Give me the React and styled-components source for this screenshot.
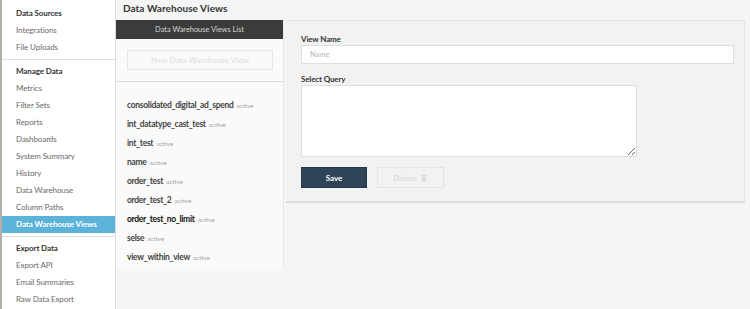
import React from "react";
import styled, { createGlobalStyle } from "styled-components";

const GlobalStyle = createGlobalStyle`
  html, body {
    margin: 0;
    padding: 0;
    background: #f5f5f5;
    font-family: Lato, "Open Sans", "Liberation Sans", sans-serif;
  }
  * { box-sizing: border-box; }
`;

const sideGroups = [
  { title: "Data Sources", items: ["Integrations", "File Uploads"] },
  {
    title: "Manage Data",
    items: [
      "Metrics",
      "Filter Sets",
      "Reports",
      "Dashboards",
      "System Summary",
      "History",
      "Data Warehouse",
      "Column Paths",
      "Data Warehouse Views",
    ],
  },
  { title: "Export Data", items: ["Export API", "Email Summaries", "Raw Data Export"] },
];

const views = [
  { name: "consolidated_digital_ad_spend" },
  { name: "int_datatype_cast_test" },
  { name: "int_test" },
  { name: "name" },
  { name: "order_test" },
  { name: "order_test_2" },
  { name: "order_test_no_limit", strong: true },
  { name: "selse" },
  { name: "view_within_view" },
];

function App() {
  return (
    <>
      <GlobalStyle />
      <Page>
        <Sidebar>
          {sideGroups.map((g, i) => (
            <Group key={g.title} last={i === sideGroups.length - 1}>
              <GroupTitle>{g.title}</GroupTitle>
              {g.items.map((item) => (
                <NavItem key={item} active={item === "Data Warehouse Views"}>
                  {item}
                </NavItem>
              ))}
            </Group>
          ))}
        </Sidebar>

        <Main>
          <PageTitle>Data Warehouse Views</PageTitle>
          <Content>
            <ListPanel>
              <ListHeader>Data Warehouse Views List</ListHeader>
              <ListTop>
                <GhostButton disabled>New Data Warehouse View</GhostButton>
              </ListTop>
              <ViewList>
                {views.map((v) => (
                  <ViewRow key={v.name}>
                    <ViewName strong={v.strong}>{v.name}</ViewName>
                    <Status>active</Status>
                  </ViewRow>
                ))}
              </ViewList>
            </ListPanel>

            <FormPanel>
              <Label>View Name</Label>
              <TextInput placeholder="Name" />
              <Label>Select Query</Label>
              <QueryArea />
              <Actions>
                <SaveButton>Save</SaveButton>
                <DeleteButton disabled>
                  Delete
                  <svg width="8" height="8" viewBox="0 0 10 10" fill="currentColor">
                    <rect x="1" y="1" width="8" height="1.4" />
                    <rect x="4" y="0" width="2" height="1.2" />
                    <path d="M2 3h6l-0.6 7H2.6z" />
                  </svg>
                </DeleteButton>
              </Actions>
            </FormPanel>
          </Content>
        </Main>
      </Page>
    </>
  );
}

const Page = styled.div`
  display: flex;
  width: 750px;
  height: 309px;
  overflow: hidden;
`;

const Sidebar = styled.nav`
  width: 116px;
  flex-shrink: 0;
  background: #fff;
  border-left: 2px solid #b3aea8;
  border-right: 1px solid #dcdcdc;
  padding-top: 5px;
`;

const Group = styled.div`
  padding-bottom: 3px;
  border-bottom: ${(p) => (p.last ? "none" : "1px solid #dedede")};
  margin-bottom: 3px;
`;

const GroupTitle = styled.div`
  height: 17px;
  line-height: 17px;
  padding-left: 14px;
  font-size: 8px;
  letter-spacing: -0.1px;
  font-weight: 700;
  color: #333;
`;

const NavItem = styled.div`
  height: 17px;
  line-height: 17px;
  padding-left: 14px;
  font-size: 8px;
  letter-spacing: -0.1px;
  font-weight: ${(p) => (p.active ? 700 : 400)};
  color: ${(p) => (p.active ? "#fff" : "#6a6a6a")};
  background: ${(p) => (p.active ? "#5cb3d9" : "transparent")};
`;

const Main = styled.div`
  flex: 1;
  display: flex;
  flex-direction: column;
`;

const PageTitle = styled.div`
  height: 20px;
  line-height: 16px;
  padding-left: 7px;
  font-size: 10px;
  letter-spacing: 0.05px;
  font-weight: 700;
  color: #333;
`;

const Content = styled.div`
  display: flex;
  align-items: flex-start;
  padding-right: 5px;
`;

const ListPanel = styled.div`
  width: 168px;
  flex-shrink: 0;
  background: #fafafa;
  border-right: 1px solid #e6e6e6;
  margin-right: 2px;
`;

const ListHeader = styled.div`
  height: 19px;
  line-height: 19px;
  background: #3b3b3b;
  color: #d6d6d6;
  text-align: center;
  font-size: 7.5px;
  letter-spacing: -0.05px;
`;

const ListTop = styled.div`
  padding: 11px 10px 11px 11px;
  border-bottom: 1px solid #dcdcdc;
`;

const GhostButton = styled.button`
  display: block;
  width: 146px;
  height: 20px;
  background: #fafafa;
  border: 1px solid #e6e6e6;
  color: #e4e4e4;
  font-family: inherit;
  font-size: 8px;
  font-weight: 700;
  padding: 0;
`;

const ViewList = styled.div`
  padding: 10px 0 6px 11px;
`;

const ViewRow = styled.div`
  height: 19px;
  line-height: 19px;
  white-space: nowrap;
`;

const ViewName = styled.span`
  font-size: 8.5px;
  letter-spacing: -0.3px;
  font-weight: 700;
  color: ${(p) => (p.strong ? "#111" : "#444")};
`;

const Status = styled.span`
  margin-left: 3px;
  font-size: 6.5px;
  color: #a5a5a5;
`;

const FormPanel = styled.div`
  flex: 1;
  height: 183px;
  background: #f2f2f2;
  border-top: 1px solid #e2e2e2;
  border-right: 1px solid #e2e2e2;
  border-bottom: 2px solid #dcdcdc;
  padding: 13px 10px 0 15px;
`;

const Label = styled.div`
  font-size: 8px;
  letter-spacing: -0.15px;
  font-weight: 700;
  color: #333;
  line-height: 10px;
  margin-bottom: 1px;
`;

const TextInput = styled.input`
  display: block;
  width: 433px;
  height: 19px;
  border: 1px solid #dedede;
  background: #fff;
  padding: 0 8px;
  font-family: inherit;
  font-size: 7.5px;
  margin-bottom: 10px;
  outline: none;
  &::placeholder { color: #b5b5b5; }
`;

const QueryArea = styled.textarea`
  display: block;
  width: 336px;
  height: 72px;
  border: 1px solid #dedede;
  background: #fff;
  margin: 0 0 10px 0;
  resize: both;
  outline: none;
`;

const Actions = styled.div`
  display: flex;
  gap: 10px;
`;

const SaveButton = styled.button`
  width: 66px;
  height: 21px;
  background: #2e4459;
  border: 1px solid #24384b;
  color: #fff;
  font-family: inherit;
  font-size: 8px;
  font-weight: 700;
  padding: 0;
`;

const DeleteButton = styled.button`
  width: 67px;
  height: 21px;
  background: #f2f2f2;
  border: 1px solid #e4e4e4;
  color: #dcdcdc;
  font-family: inherit;
  font-size: 8px;
  font-weight: 700;
  padding: 0;
  display: flex;
  align-items: center;
  justify-content: center;
  gap: 3px;
`;

export default App;
